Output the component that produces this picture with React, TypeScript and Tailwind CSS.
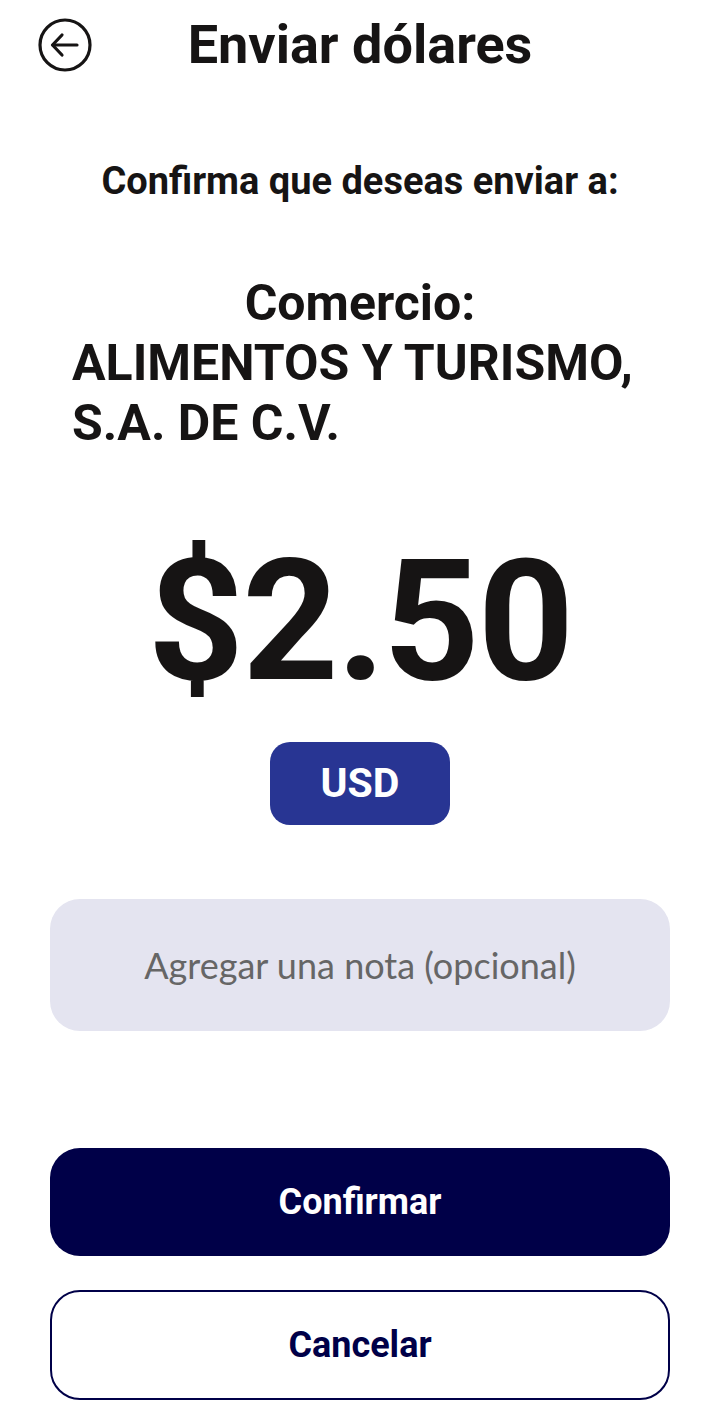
import React from "react";

function BackIcon() {
  return (
    <svg width="54" height="54" viewBox="0 0 54 54" fill="none" stroke="#161414" strokeWidth="3.2" strokeLinecap="round" strokeLinejoin="round">
      <circle cx="27" cy="27" r="25" />
      <path d="M15 27 H39" />
      <path d="M24 17 L14.5 27 L24 37" />
    </svg>
  );
}

export default function App() {
  return (
    <div className="w-[720px] h-[1418px] bg-white text-[#161414] font-['Roboto',sans-serif] flex flex-col">
      <header className="flex items-center h-[90px] px-[38px]">
        <BackIcon />
        <h1 className="flex-1 text-center text-[54px] font-bold pr-[54px] leading-none">Enviar dólares</h1>
      </header>

      <p className="mt-[72px] text-center text-[38px] font-bold leading-none">Confirma que deseas enviar a:</p>

      <div className="mt-[73px] px-[72px] text-[50px] font-bold leading-[60px]">
        <p className="text-center">Comercio:</p>
        <p>ALIMENTOS Y TURISMO,</p>
        <p>S.A. DE C.V.</p>
      </div>

      <p className="mt-[85px] text-center text-[168px] font-bold leading-none tracking-[-2px]">$2.50</p>

      <div className="mt-[36px] flex justify-center">
        <span className="w-[180px] h-[83px] rounded-[20px] bg-[#283593] text-white text-[41px] font-bold flex items-center justify-center">USD</span>
      </div>

      <div className="mt-[74px] mx-[50px] h-[132px] rounded-[30px] bg-[#e4e4f0] flex items-center justify-center">
        <span className="font-['Lato',sans-serif] text-[36px] text-[#666666]">Agregar una nota (opcional)</span>
      </div>

      <button className="mt-[117px] mx-[50px] h-[108px] rounded-[30px] bg-[#000048] text-white text-[36px] font-bold">Confirmar</button>
      <button className="mt-[34px] mx-[50px] h-[110px] rounded-[30px] border-2 border-[#000048] bg-white text-[#000048] text-[36px] font-bold">Cancelar</button>
    </div>
  );
}
